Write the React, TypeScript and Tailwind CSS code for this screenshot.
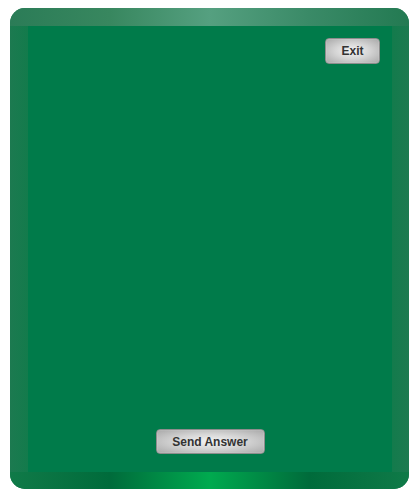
import React from "react";

const btn =
  "flex items-center justify-center rounded-[4px] border border-[#8d8d8d] bg-[radial-gradient(ellipse_at_center,#f4f4f4_0%,#d6d6d6_45%,#a8a8a8_100%)] text-[12px] font-bold text-[#333] font-['Liberation_Sans',Arial,sans-serif] leading-none shadow-[inset_0_0_1px_#ffffff]";

export default function App() {
  return (
    <div className="w-[419px] h-[497px] bg-white pt-[8px] pl-[10px]">
      <div className="w-[399px] h-[481px] rounded-[15px] overflow-hidden flex flex-col bg-[#237b55]">
        <div className="h-[18px] bg-[linear-gradient(to_right,#2b7c57_0%,#38875f_25%,#55a080_50%,#3a8a67_75%,#237a52_100%)]" />
        <div className="flex flex-1">
          <div className="w-[18px] bg-[linear-gradient(to_right,#1c7a50,#137b4c)]" />
          <div className="flex-1 flex flex-col bg-[#007b4a]">
            <div className="flex justify-end pt-[12px] pr-[12px]">
              <button className={`${btn} w-[55px] h-[26px]`}>Exit</button>
            </div>
            <div className="flex-1" />
            <div className="flex justify-center pb-[18px]">
              <button className={`${btn} w-[109px] h-[25px]`}>Send Answer</button>
            </div>
          </div>
          <div className="w-[17px] bg-[linear-gradient(to_right,#137b4c,#1c7a50)]" />
        </div>
        <div className="h-[17px] bg-[linear-gradient(to_right,#107a48_0%,#006b3b_25%,#00aa4f_50%,#006b3b_75%,#0f7a48_100%)]" />
      </div>
    </div>
  );
}
